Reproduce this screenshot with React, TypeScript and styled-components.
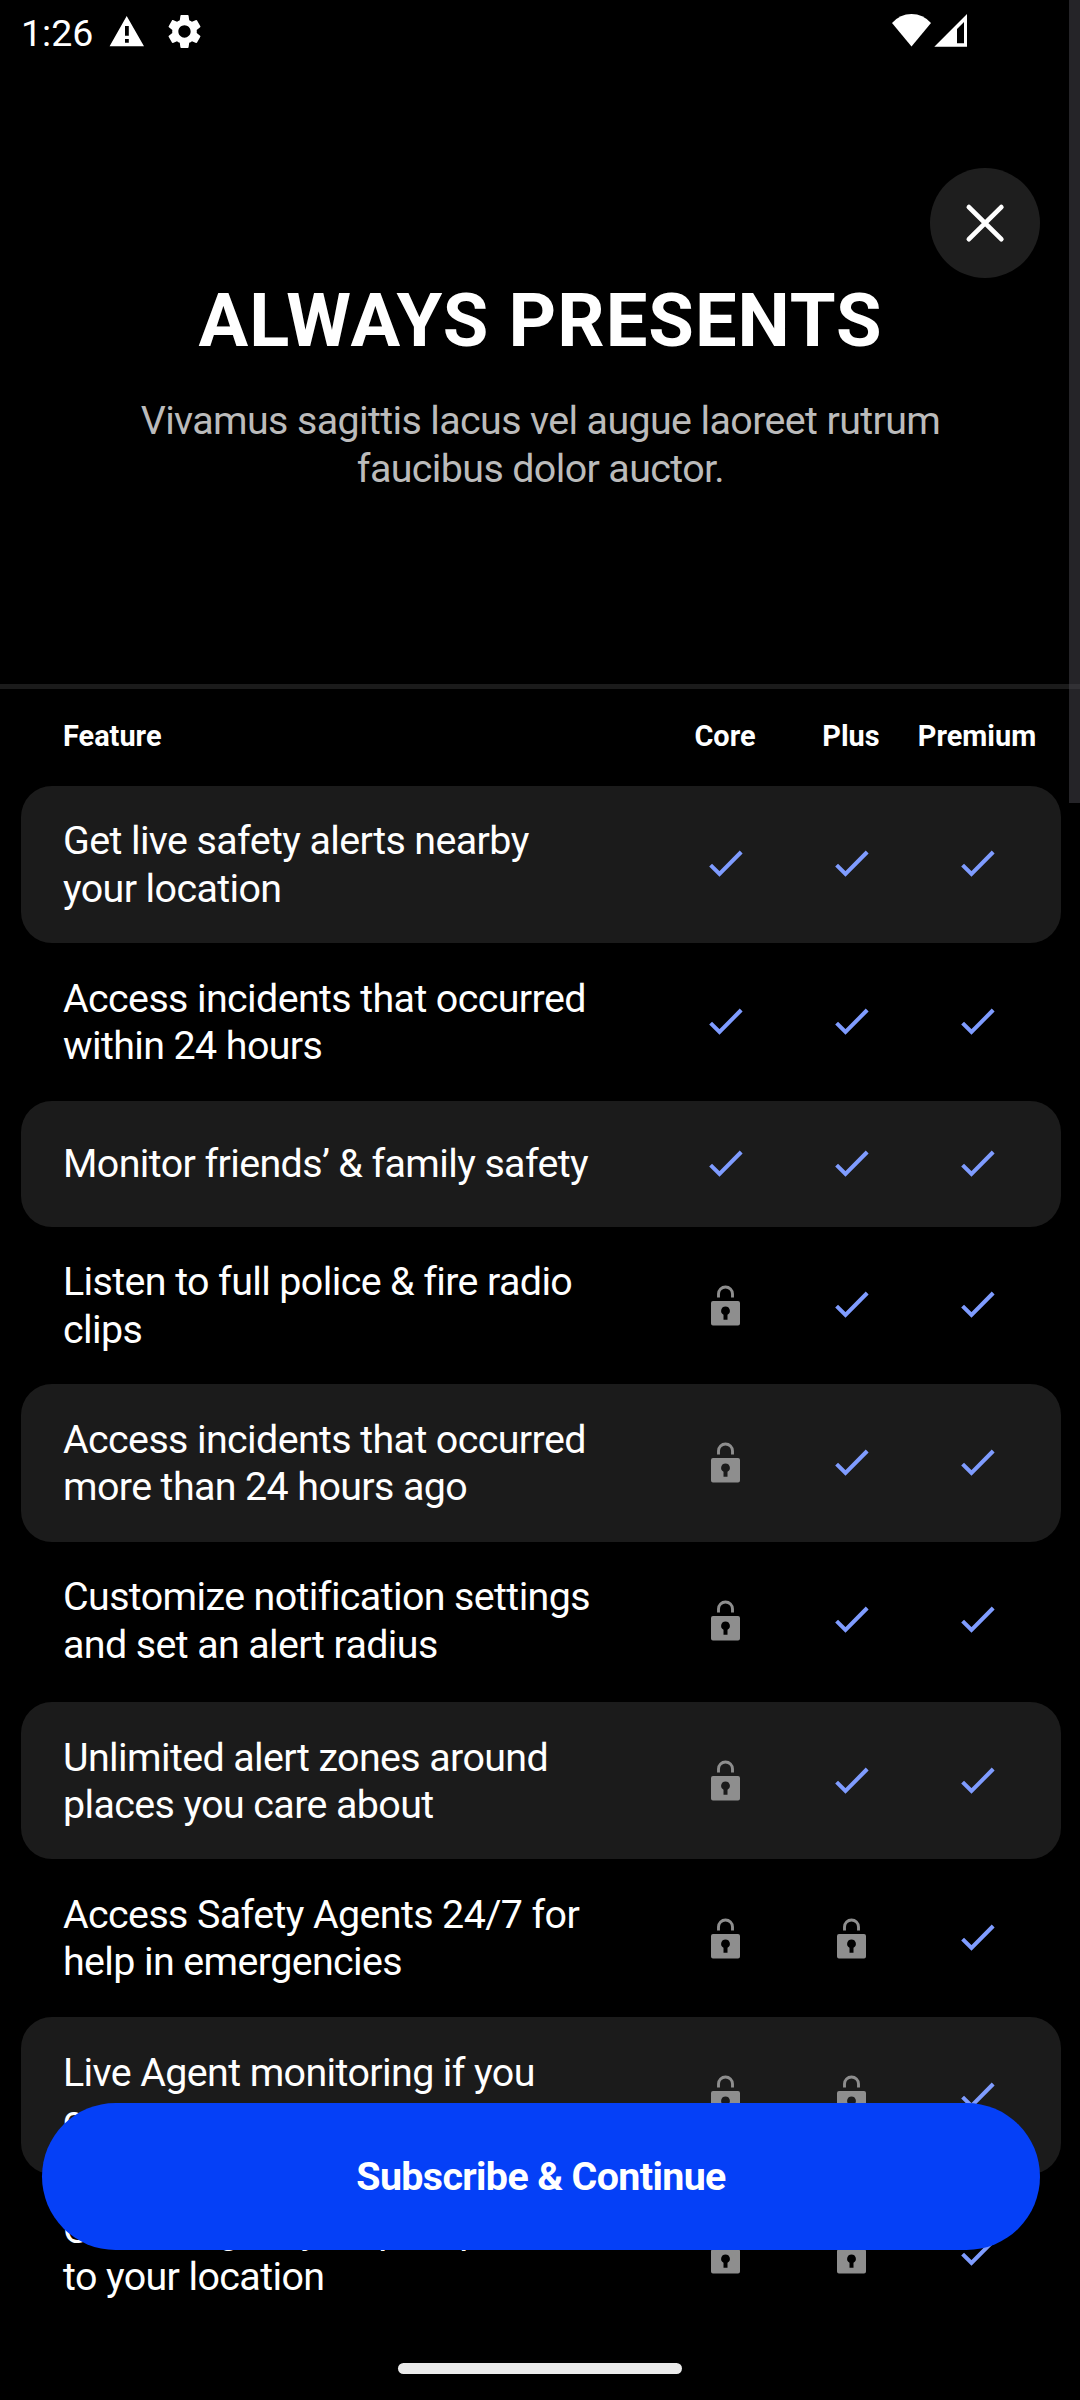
import React from 'react';
import styled, { createGlobalStyle } from 'styled-components';

const GlobalStyle = createGlobalStyle`
  * { box-sizing: border-box; }
  body { margin: 0; background: #000; }
`;

const Screen = styled.main`
  position: relative;
  display: flex;
  flex-direction: column;
  width: 1080px;
  height: 2400px;
  overflow: hidden;
  background: #000;
  color: #fff;
  font-family: Roboto, sans-serif;
`;

const StatusBar = styled.div`
  display: flex;
  align-items: flex-start;
  justify-content: space-between;
  height: 168px;
  padding: 12px 113px 0 21px;
`;

const StatusGroup = styled.div<{ $height: number }>`
  display: flex;
  align-items: center;
  height: ${(p) => p.$height}px;
`;

const Clock = styled.span`
  width: 88px;
  padding-top: 3px;
  font-size: 37.5px;
  line-height: 42px;
`;

const StatusIcon = styled.svg<{ $gap?: number }>`
  display: block;
  margin-left: ${(p) => p.$gap ?? 0}px;
`;

const CloseRow = styled.div`
  display: flex;
  justify-content: flex-end;
  height: 110px;
  padding-right: 40px;
`;

const CloseButton = styled.button`
  display: grid;
  place-items: center;
  width: 110px;
  height: 110px;
  padding: 0;
  border: 0;
  border-radius: 50%;
  background: #1e1e1e;
`;

const Hero = styled.header`
  display: flex;
  flex-direction: column;
  align-items: center;
  height: 406px;
  padding-left: 1px;
  text-align: center;
`;

const Title = styled.h1`
  margin: 0;
  font-size: 74px;
  line-height: 86px;
  font-weight: 700;
  letter-spacing: 1px;
`;

const Subtitle = styled.p`
  margin: 33.4px 0 0;
  width: 860px;
  font-size: 39.4px;
  line-height: 47.25px;
  letter-spacing: -0.62px;
  color: #bbb;
`;

const Divider = styled.div`
  height: 5px;
  background: #1b1b1b;
`;

const Columns = styled.div`
  display: grid;
  grid-template-columns: 599px repeat(3, 126px);
  align-items: center;
  padding-left: 42px;
`;

const HeaderRow = styled(Columns)`
  height: 96.6px;
  margin-left: 21px;
  padding-bottom: 3px;
  font-size: 28.9px;
  font-weight: 700;
`;

const HeaderCell = styled.span<{ $center?: boolean }>`
  text-align: ${(p) => (p.$center ? 'center' : 'left')};
  white-space: nowrap;
`;

const FeatureRow = styled(Columns)<{ $shaded: boolean; $height: number; $after: number }>`
  width: 1040px;
  height: ${(p) => p.$height}px;
  margin-left: 21px;
  margin-bottom: ${(p) => p.$after}px;
  flex-shrink: 0;
  border-radius: 31px;
  background: ${(p) => (p.$shaded ? '#1b1b1b' : 'transparent')};
`;

const FeatureName = styled.span`
  padding-top: 0.4px;
  font-size: 39.4px;
  line-height: 47.35px;
  letter-spacing: -0.61px;
  white-space: pre-line;
`;

const Cell = styled.span`
  display: grid;
  place-items: center;
  padding-left: 1px;
`;

const ScrollThumb = styled.div`
  position: absolute;
  top: 0;
  right: 0;
  width: 11px;
  height: 803px;
  background: rgba(73, 71, 80, 0.5);
`;

const SubscribeButton = styled.button`
  position: absolute;
  left: 42px;
  top: 2103px;
  width: 998px;
  height: 147px;
  padding: 0;
  border: 0;
  border-radius: 74px;
  background: #0540f7;
  color: #fff;
  font: 700 39.4px Roboto, sans-serif;
  letter-spacing: -0.64px;
`;

const HomeIndicator = styled.div`
  position: absolute;
  left: 398px;
  top: 2363px;
  width: 284px;
  height: 11px;
  border-radius: 6px;
  background: #ebebeb;
`;

const CheckIcon = () => (
  <svg width="34" height="28" viewBox="0 0 34 28">
    <path d="M1.6 15.1 L10.5 24 L32.2 2" fill="none" stroke="#7f9cff" strokeWidth="4" />
  </svg>
);

const LockIcon = () => (
  <svg width="29" height="41" viewBox="0 0 29 41">
    <path d="M7.5 12.5V9a7 7 0 0 1 14 0V12.5" fill="none" stroke="#8e8e8e" strokeWidth="2.9" />
    <path
      fill="#8e8e8e"
      fillRule="evenodd"
      d="M2 16H27a2 2 0 0 1 2 2V38.4a2 2 0 0 1-2 2H2a2 2 0 0 1-2-2V18a2 2 0 0 1 2-2ZM14.5 21.5a4.4 4.4 0 0 0-2 8.3V34.8h4V29.8a4.4 4.4 0 0 0-2-8.3Z"
    />
  </svg>
);

type Feature = { name: string; height: number; after?: number; included: [boolean, boolean, boolean] };

const features: Feature[] = [
  { name: 'Get live safety alerts nearby\nyour location', height: 157.5, included: [true, true, true] },
  { name: 'Access incidents that occurred\nwithin 24 hours', height: 157.5, included: [true, true, true] },
  { name: 'Monitor friends’ & family safety', height: 126, included: [true, true, true] },
  { name: 'Listen to full police & fire radio\nclips', height: 157.5, included: [false, true, true] },
  { name: 'Access incidents that occurred\nmore than 24 hours ago', height: 157.5, included: [false, true, true] },
  { name: 'Customize notification settings\nand set an alert radius', height: 157.5, after: 2.9, included: [false, true, true] },
  { name: 'Unlimited alert zones around\nplaces you care about', height: 157.5, included: [false, true, true] },
  { name: 'Access Safety Agents 24/7 for\nhelp in emergencies', height: 157.5, included: [false, false, true] },
  { name: 'Live Agent monitoring if you\ncan’t talk', height: 157.5, included: [false, false, true] },
  { name: 'Get emergency help dispatched\nto your location', height: 157.5, included: [false, false, true] },
];

export default function App() {
  return (
    <Screen>
      <GlobalStyle />
      <StatusBar>
        <StatusGroup $height={39}>
          <Clock>1:26</Clock>
          <StatusIcon width="35" height="31" viewBox="0 0 35 31">
            <path
              fill="#fff"
              fillRule="evenodd"
              d="M17.7 0 L35 30.3 H0.6 Z M16 10 V19.7 H19.8 V10 Z M16 23 V26.7 H19.8 V23 Z"
            />
          </StatusIcon>
          <StatusIcon $gap={20} width="41" height="41" viewBox="0 0 24 24">
            <path
              fill="#fff"
              d="M19.14 12.94c.04-.3.06-.61.06-.94 0-.32-.02-.64-.07-.94l2.03-1.58a.49.49 0 0 0 .12-.61l-1.92-3.32a.488.488 0 0 0-.59-.22l-2.39.96c-.5-.38-1.03-.7-1.62-.94l-.36-2.54a.484.484 0 0 0-.48-.41h-3.84c-.24 0-.43.17-.47.41l-.36 2.54c-.59.24-1.13.57-1.62.94l-2.39-.96c-.22-.08-.47 0-.59.22L2.74 8.87c-.12.21-.08.47.12.61l2.03 1.58c-.05.3-.09.63-.09.94s.02.64.07.94l-2.03 1.58a.49.49 0 0 0-.12.61l1.92 3.32c.12.22.37.29.59.22l2.39-.96c.5.38 1.03.7 1.62.94l.36 2.54c.05.24.24.41.48.41h3.84c.24 0 .44-.17.47-.41l.36-2.54c.59-.24 1.13-.56 1.62-.94l2.39.96c.22.08.47 0 .59-.22l1.92-3.32c.12-.22.07-.47-.12-.61l-2.01-1.58zM12 15.6c-1.98 0-3.6-1.62-3.6-3.6s1.62-3.6 3.6-3.6 3.6 1.62 3.6 3.6-1.62 3.6-3.6 3.6z"
            />
          </StatusIcon>
        </StatusGroup>
        <StatusGroup $height={37}>
          <StatusIcon width="39" height="33" viewBox="0 0 39 33">
            <path fill="#fff" d="M0 9 Q8 0 19.5 0 Q31 0 39 9 L19.5 32.5 Z" />
          </StatusIcon>
          <StatusIcon $gap={3} width="33" height="33" viewBox="0 0 33 33">
            <path fill="#fff" fillRule="evenodd" d="M33 0 V32.7 H0.3 Z M23 15 V29.3 H30 V8 Z" />
          </StatusIcon>
        </StatusGroup>
      </StatusBar>
      <CloseRow>
        <CloseButton aria-label="Close">
          <svg width="40" height="40" viewBox="0 0 40 40">
            <path d="M3.9 4.1 L36.3 36.1 M36.3 4.1 L3.9 36.1" stroke="#fff" strokeWidth="4.8" strokeLinecap="round" />
          </svg>
        </CloseButton>
      </CloseRow>
      <Hero>
        <Title>ALWAYS PRESENTS</Title>
        <Subtitle>Vivamus sagittis lacus vel augue laoreet rutrum faucibus dolor auctor.</Subtitle>
      </Hero>
      <Divider />
      <HeaderRow>
        <HeaderCell>Feature</HeaderCell>
        <HeaderCell $center>Core</HeaderCell>
        <HeaderCell $center>Plus</HeaderCell>
        <HeaderCell $center>Premium</HeaderCell>
      </HeaderRow>
      {features.map((feature, index) => (
        <FeatureRow
          key={feature.name}
          $shaded={index % 2 === 0}
          $height={feature.height}
          $after={feature.after ?? 0}
        >
          <FeatureName>{feature.name}</FeatureName>
          {feature.included.map((included, column) => (
            <Cell key={column}>{included ? <CheckIcon /> : <LockIcon />}</Cell>
          ))}
        </FeatureRow>
      ))}
      <ScrollThumb />
      <SubscribeButton>Subscribe &amp; Continue</SubscribeButton>
      <HomeIndicator />
    </Screen>
  );
}
